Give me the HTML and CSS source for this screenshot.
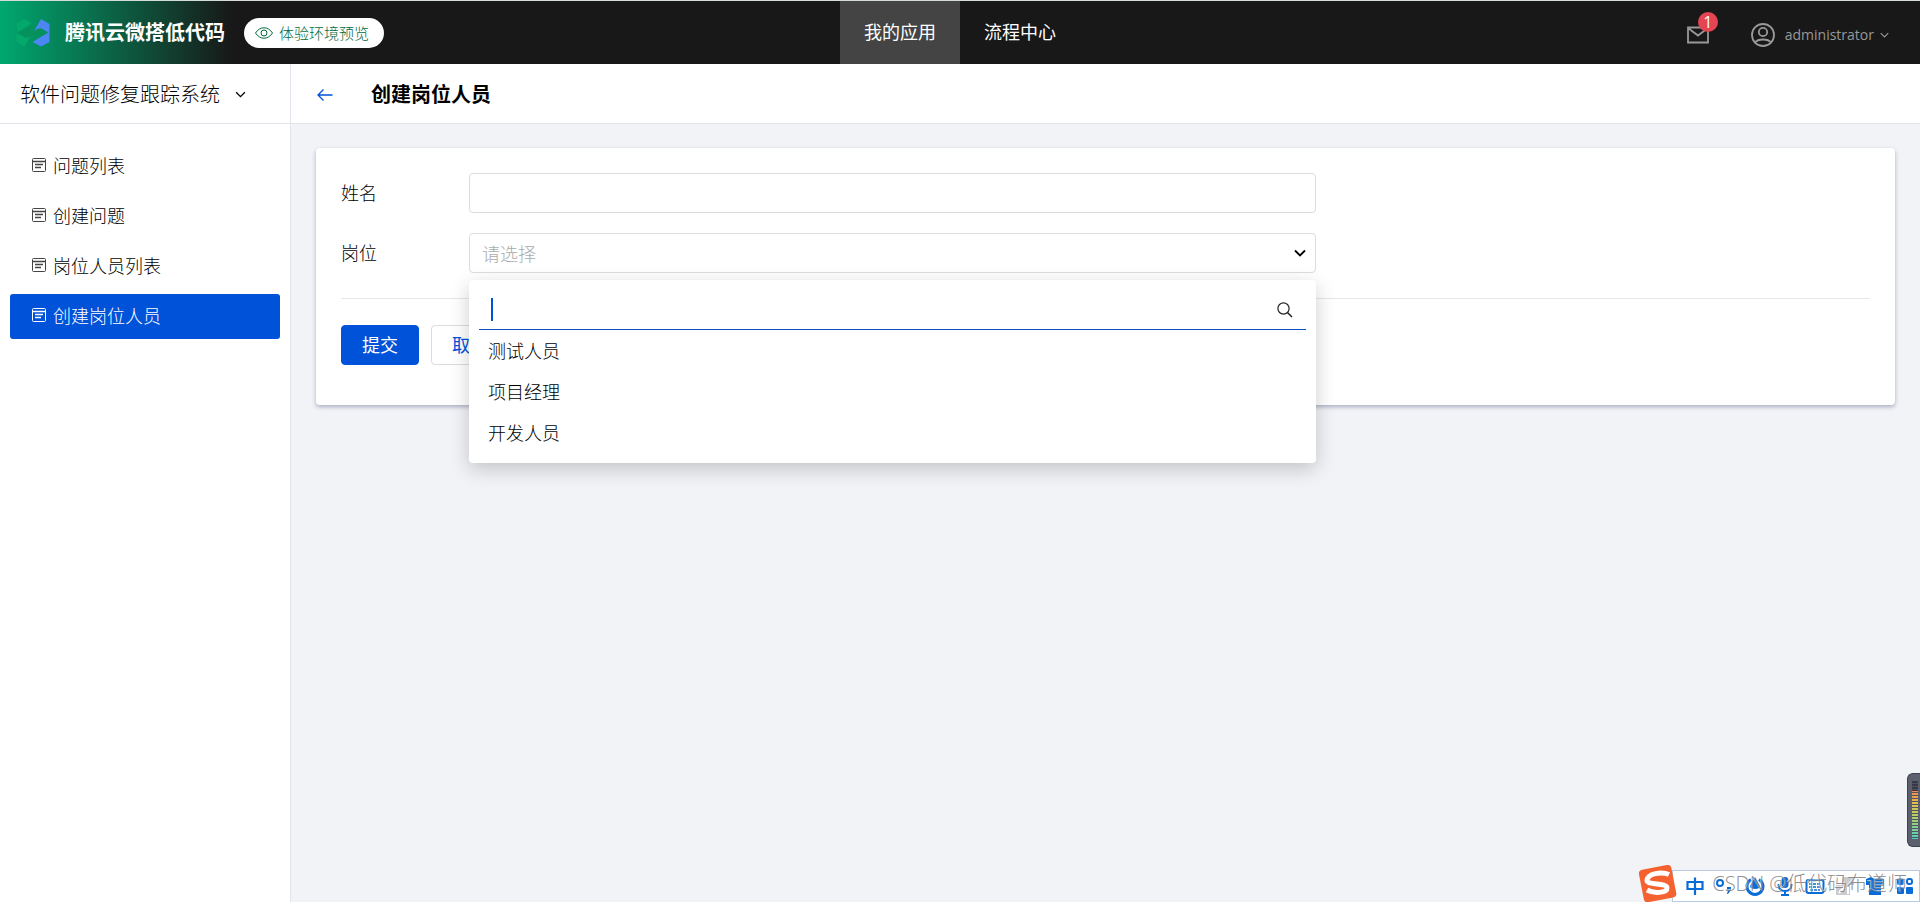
FILE: index.html
```
<!DOCTYPE html>
<html lang="zh-CN">
<head>
<meta charset="utf-8">
<meta name="viewport" content="width=device-width, initial-scale=1">
<title>创建岗位人员</title>
<link rel="stylesheet" href="styles.css">
</head>
<body>
<svg class="symbols" aria-hidden="true">
  <symbol id="page-icon" viewBox="0 0 14 14">
    <rect x="0.5" y="0.5" width="13" height="13" rx="1" fill="none" stroke="currentColor"/>
    <path d="M1 3.5h12M3 6.500h8M3 9.500h6" fill="none" stroke="currentColor" stroke-width="1.300"/>
  </symbol>
  <symbol id="chevron" viewBox="0 0 12 8">
    <path d="M1 1.5l5 5 5-5" fill="none" stroke="currentColor" stroke-width="1.5"/>
  </symbol>
</svg>

<header class="topbar">
  <div class="brand">
    <svg class="brand-logo" viewBox="0 0 34 28" aria-hidden="true">
      <path d="M0.500 4.500L8 0l8 4L1.500 13z" fill="#04a86b"/>
      <path d="M0.500 14.500L10 18l6-4-7.500 13.500-8-4.500z" fill="#04a86b"/>
      <path d="M25 0l8.500 5v18L25 27.500 16.500 23 32 13.500 26 10l-9 4z" fill="#4c86f3"/>
      <path d="M2 14l15-8-3 7.500L24 9l8 4.500L16.500 22l3-7L10 19z" fill="#05905c"/>
    </svg>
    <span class="brand-name">腾讯云微搭低代码</span>
    <button class="preview-pill" type="button">
      <svg class="eye-icon" viewBox="0 0 18 12" aria-hidden="true">
        <path d="M0.500 6C5 -1 13 -1 17.500 6 13 13 5 13 0.500 6z" fill="none" stroke="currentColor"/>
        <circle cx="9" cy="6" r="3" fill="none" stroke="currentColor"/>
      </svg>
      体验环境预览
    </button>
  </div>
  <nav class="main-nav">
    <a class="main-link is-active" href="#apps">我的应用</a>
    <a class="main-link" href="#flow">流程中心</a>
  </nav>
  <div class="account">
    <button class="mail" type="button" aria-label="消息">
      <svg class="mail-icon" viewBox="0 0 22 18" aria-hidden="true">
        <path d="M1 1.500h20v15H1zM1 2l10 7.500L21 2" fill="none" stroke="currentColor" stroke-width="1.800"/>
      </svg>
      <span class="mail-count">1</span>
    </button>
    <button class="user" type="button">
      <svg class="user-icon" viewBox="0 0 24 24" aria-hidden="true">
        <g fill="none" stroke="currentColor" stroke-width="1.800">
          <circle cx="12" cy="12" r="11"/>
          <circle cx="12" cy="9" r="4.200"/>
          <path d="M4 19.500c3-4 13-4 16 0"/>
        </g>
      </svg>
      administrator
      <svg class="user-chevron" aria-hidden="true"><use href="#chevron"/></svg>
    </button>
  </div>
</header>

<div class="workspace">
  <aside class="sidebar">
    <button class="app-switch" type="button">
      软件问题修复跟踪系统
      <svg class="app-chevron" aria-hidden="true"><use href="#chevron"/></svg>
    </button>
    <nav class="menu">
      <a class="menu-link" href="#issues"><svg class="menu-icon" aria-hidden="true"><use href="#page-icon"/></svg>问题列表</a>
      <a class="menu-link" href="#new-issue"><svg class="menu-icon" aria-hidden="true"><use href="#page-icon"/></svg>创建问题</a>
      <a class="menu-link" href="#staff"><svg class="menu-icon" aria-hidden="true"><use href="#page-icon"/></svg>岗位人员列表</a>
      <a class="menu-link is-active" href="#new-staff"><svg class="menu-icon" aria-hidden="true"><use href="#page-icon"/></svg>创建岗位人员</a>
    </nav>
  </aside>

  <main class="content">
    <div class="page-head">
      <a class="back" href="#staff" aria-label="返回">
        <svg class="back-icon" viewBox="0 0 16 12" aria-hidden="true">
          <path d="M6.500 0.500L1 6l5.500 5.500M1 6h14.500" fill="none" stroke="currentColor" stroke-width="1.300"/>
        </svg>
      </a>
      <h1 class="page-title">创建岗位人员</h1>
    </div>

    <form class="card">
      <div class="field">
        <label class="field-label" for="name">姓名</label>
        <input class="control" id="name" type="text">
      </div>
      <div class="field">
        <label class="field-label" for="post">岗位</label>
        <div class="select-box">
          <select class="control select" id="post">
            <option>请选择</option>
          </select>
          <svg class="select-chevron" viewBox="0 0 12 8" aria-hidden="true">
            <path d="M1 1.500l5 5 5-5" fill="none" stroke="#000" stroke-width="1.800"/>
          </svg>
          <div class="dropdown">
            <div class="search">
              <span class="search-caret"></span>
              <input class="search-input" type="text" aria-label="搜索岗位">
              <svg class="search-icon" viewBox="0 0 16 16" aria-hidden="true">
                <path d="M10.500 10.500L15 15" stroke="#222" stroke-width="1.500"/>
                <circle cx="6.500" cy="6.500" r="5.600" fill="none" stroke="#222" stroke-width="1.200"/>
              </svg>
            </div>
            <button class="choice" type="button">测试人员</button>
            <button class="choice" type="button">项目经理</button>
            <button class="choice" type="button">开发人员</button>
          </div>
        </div>
      </div>
      <div class="actions">
        <button class="btn btn-primary" type="submit">提交</button>
        <button class="btn" type="button">取消</button>
      </div>
    </form>
  </main>
</div>

<div class="level-meter">
  <svg class="meter-bars" viewBox="0 0 6 58" aria-hidden="true">
    <defs>
      <linearGradient id="meter" x1="0" y1="0" x2="0" y2="1">
        <stop offset="0" stop-color="#f08a54"/>
        <stop offset="0.250" stop-color="#e5bd4c"/>
        <stop offset="0.500" stop-color="#b9cf63"/>
        <stop offset="1" stop-color="#4fd0bd"/>
      </linearGradient>
      <pattern id="gaps" width="6" height="3" patternUnits="userSpaceOnUse">
        <rect y="2" width="6" height="1" fill="#50535f"/>
      </pattern>
    </defs>
    <rect width="6" height="10" fill="#363944"/>
    <rect y="10" width="6" height="48" fill="url(#meter)"/>
    <rect width="6" height="58" fill="url(#gaps)"/>
  </svg>
</div>

<div class="ime">
  <svg class="ime-logo" viewBox="0 0 40 38" aria-hidden="true">
    <rect x="3" y="3" width="33" height="33" rx="4" fill="#f5622f" transform="rotate(-11 20 19)"/>
    <path d="M31 10.500C23 7 10 10 9 16c-1 6 20 2 20 8 0 5-13 6-20 2" fill="none" stroke="#fff" stroke-width="5"/>
  </svg>
  <svg class="ime-icon" viewBox="0 0 20 20" aria-hidden="true">
    <path d="M2.500 6h15v7h-15zM10 1.500V19" fill="none" stroke="currentColor" stroke-width="2.200"/>
  </svg>
  <svg class="ime-icon" viewBox="0 0 20 20" aria-hidden="true">
    <circle cx="5" cy="7" r="3" fill="none" stroke="currentColor" stroke-width="2"/>
    <path d="M12 11h4v3l-3 4h-1l1-4h-1z" fill="currentColor"/>
  </svg>
  <svg class="ime-icon" viewBox="0 0 20 20" aria-hidden="true">
    <path d="M6 3.500a8 8 0 1 0 8 0" fill="none" stroke="currentColor" stroke-width="3"/>
    <path d="M10 1l5 9q0 3-5 3t-5-3z" fill="currentColor"/>
  </svg>
  <svg class="ime-icon" viewBox="0 0 20 20" aria-hidden="true">
    <rect x="6.500" y="1" width="7" height="11" rx="3.500" fill="currentColor"/>
    <path d="M3.500 8q0 7 6.500 7t6.500-7M10 15v4M6 19h8" fill="none" stroke="currentColor" stroke-width="2"/>
  </svg>
  <svg class="ime-icon" viewBox="0 0 20 20" aria-hidden="true">
    <rect x="1.500" y="4" width="17" height="13" rx="2" fill="none" stroke="currentColor" stroke-width="2"/>
    <path d="M4 8h12M4 11h12M5 14h10" stroke="currentColor" stroke-width="1.500" stroke-dasharray="3 1"/>
  </svg>
  <svg class="ime-icon" viewBox="0 0 20 20" aria-hidden="true">
    <path d="M7 1h12v8h-4v10H1V9h6z" fill="#c9cbcf"/>
    <path d="M4 17l5-6M13 11v7" stroke="#fff" stroke-width="2"/>
  </svg>
  <svg class="ime-icon" viewBox="0 0 20 20" aria-hidden="true">
    <path d="M1 3l5-2q4 3 8 0l5 2v6h-3v10H4V9H1z" fill="currentColor"/>
  </svg>
  <svg class="ime-icon" viewBox="0 0 20 20" aria-hidden="true">
    <g fill="currentColor">
      <rect x="2" y="2" width="7" height="7" rx="2"/>
      <rect x="2" y="11" width="7" height="7" rx="1"/>
      <rect x="11" y="11" width="7" height="7" rx="1"/>
    </g>
    <rect x="12" y="3" width="5" height="5" rx="2" fill="none" stroke="currentColor" stroke-width="2"/>
  </svg>
  <span class="watermark">CSDN @低代码布道师</span>
</div>
</body>
</html>
```

FILE: styles.css
```
* { box-sizing: border-box; }

body {
  margin: 0;
  min-height: 100vh;
  display: flex;
  flex-direction: column;
  font: 300 18px/24px "Open Sans", "Noto Sans CJK SC", sans-serif;
  color: #000;
  background: #f2f3f7;
}

button, input, select {
  font: inherit;
  color: inherit;
  margin: 0;
}

button {
  padding: 0;
  border: 0;
  background: none;
  cursor: pointer;
}

a { color: inherit; text-decoration: none; }
svg { flex: none; display: block; }
.symbols { position: absolute; width: 0; height: 0; }

/* Top bar */
.topbar {
  display: grid;
  grid-template-columns: 1fr auto 1fr;
  height: 64px;
  border-top: 1px solid #d5dbd8;
  background: linear-gradient(90deg, #00a870 0, #181818 232px);
  color: #fff;
}

.brand { display: flex; align-items: center; padding-left: 16px; }
.brand-logo { width: 34px; height: 28px; }
.brand-name { margin-left: 15px; font-size: 20px; font-weight: 700; }

.preview-pill {
  display: flex;
  align-items: center;
  gap: 6px;
  height: 30px;
  margin-left: 19px;
  padding: 0 15px 0 11px;
  border-radius: 15px;
  background: #fff;
  color: #006b3c;
  font-size: 15px;
}
.eye-icon { width: 18px; height: 12px; }

.main-nav { display: flex; }
.main-link {
  display: flex;
  align-items: center;
  justify-content: center;
  width: 120px;
  padding-bottom: 2px;
  font-weight: 400;
}
.main-link.is-active { background: #444; }

.account {
  display: flex;
  align-items: center;
  justify-content: flex-end;
  gap: 42px;
  padding: 4px 31px 0 0;
  color: #999;
}
.mail { position: relative; }
.mail-icon { width: 22px; height: 18px; }
.mail-count {
  position: absolute;
  top: -14px;
  right: -9px;
  width: 20px;
  border-radius: 10px;
  background: #e54552;
  color: #fff;
  font-size: 16px;
  font-weight: 400;
  line-height: 20px;
}
.user { display: flex; align-items: center; font-size: 14px; font-weight: 400; }
.user-icon { width: 24px; height: 24px; margin-right: 10px; }
.user-chevron { width: 9px; height: 6px; margin-left: 6px; }

/* Sidebar */
.workspace { display: flex; flex: 1; }
.sidebar {
  width: 291px;
  flex: none;
  border-right: 1px solid #e1e4ea;
  background: #fff;
}
.app-switch {
  display: flex;
  align-items: center;
  gap: 15px;
  width: 100%;
  height: 60px;
  padding: 2px 0 0 20px;
  border-bottom: 1px solid #e1e4ea;
  font-size: 20px;
}
.app-chevron { width: 11px; height: 7px; }

.menu { display: grid; gap: 5px; padding: 20px 10px; }
.menu-link {
  display: flex;
  align-items: center;
  gap: 7px;
  height: 45px;
  padding: 0 0 2px 22px;
  border-radius: 3px;
}
.menu-icon { width: 14px; height: 14px; margin-bottom: 1px; color: #444; }
.menu-link.is-active { background: #0052d9; color: #fff; }
.is-active .menu-icon { color: #fff; }

/* Page */
.content { flex: 1; min-width: 0; }
.page-head {
  display: flex;
  align-items: center;
  gap: 38px;
  height: 60px;
  padding: 3px 0 0 26px;
  border-bottom: 1px solid #e1e4ea;
  background: #fff;
}
.back { color: #0052d9; }
.back-icon { width: 16px; height: 12px; }
.page-title { margin: 0; font-size: 20px; font-weight: 700; }

.card {
  margin: 24px 25px;
  padding: 25px 25px 40px;
  border-radius: 4px;
  background: #fff;
  box-shadow: 0 2px 4px rgba(40, 50, 90, 0.35);
}

.field { display: flex; align-items: center; margin-bottom: 20px; }
.field-label { width: 128px; flex: none; }
.control {
  width: 100%;
  max-width: 847px;
  height: 40px;
  padding: 0 12px;
  border: 1px solid #dcdcdc;
  border-radius: 4px;
  background: #fff;
  outline: 0;
}
.select-box { position: relative; width: 100%; max-width: 847px; }
.select { display: block; appearance: none; padding-top: 2px; color: #aaa; }
.select-chevron {
  position: absolute;
  top: 16px;
  right: 10px;
  width: 12px;
  height: 8px;
  pointer-events: none;
}

.dropdown {
  position: absolute;
  top: 47px;
  left: 0;
  right: 0;
  z-index: 1;
  padding: 10px;
  border-radius: 4px;
  background: #fff;
  box-shadow: 0 6px 20px rgba(0, 0, 0, 0.2);
}
.search {
  display: flex;
  align-items: center;
  height: 40px;
  padding: 0 13px 0 12px;
  border-bottom: 1px solid #0f4fc0;
}
.search-caret { width: 2px; height: 23px; background: #0052d9; }
.search-input { flex: 1; min-width: 0; border: 0; outline: 0; background: none; }
.search-icon { width: 16px; height: 16px; }
.choice {
  display: block;
  width: 100%;
  height: 41px;
  padding-left: 9px;
  text-align: left;
}

.actions {
  display: flex;
  gap: 12px;
  margin-top: 25px;
  padding-top: 26px;
  border-top: 1px solid #e7e7e7;
}
.btn {
  width: 78px;
  height: 40px;
  border: 1px solid #dcdcdc;
  border-radius: 4px;
  color: #0052d9;
  font-weight: 400;
}
.btn-primary { border-color: #0052d9; background: #0052d9; color: #fff; }

/* Desktop overlays */
.level-meter {
  position: fixed;
  right: 0;
  bottom: 55px;
  padding: 7px 2px 7px 4px;
  border: 1px solid #3d404b;
  border-right: 0;
  border-radius: 6px 0 0 6px;
  background: #5b5f6e;
}
.meter-bars { width: 6px; height: 58px; }

.ime {
  position: fixed;
  right: 0;
  bottom: 0;
  display: flex;
  align-items: center;
  gap: 10px;
  width: 248px;
  height: 32px;
  border: 1px solid #b9cbe4;
  background: #fff;
  color: #0a6cd6;
}
.ime-logo { width: 40px; height: 38px; margin: 0 -3px 6px -35px; }
.ime-icon { width: 20px; height: 20px; }
.watermark {
  position: absolute;
  right: 12px;
  bottom: 5px;
  color: rgba(130, 130, 130, 0.9);
  font-size: 20px;
  white-space: nowrap;
  text-shadow: -1px -1px 0 rgba(255, 255, 255, 0.6);
}
```
